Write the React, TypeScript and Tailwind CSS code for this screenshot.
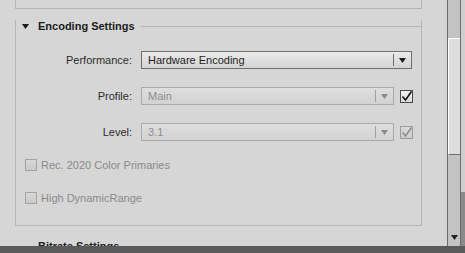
import React from "react";

const Arrow = ({ color }: { color: string }) => (
  <svg width="7" height="5" viewBox="0 0 7 5">
    <polygon points="0,0 7,0 3.5,5" fill={color} />
  </svg>
);

const Select = ({
  value,
  width,
  disabled = false,
}: {
  value: string;
  width: string;
  disabled?: boolean;
}) => (
  <div
    className={`flex h-[18px] items-stretch border bg-gradient-to-b ${width} ${
      disabled
        ? "border-[#a9a9a9] from-[#dedede] to-[#d2d2d2] text-[#8e8e8e]"
        : "border-[#6e6e6e] from-[#ebebeb] to-[#d3d3d3] text-[#1e1e1e]"
    }`}
  >
    <span className="flex flex-1 items-center pl-[6px] leading-none">{value}</span>
    <div className="flex w-[18px] items-center justify-center py-[2px]">
      <div
        className={`flex h-full w-full items-center justify-center border-l ${
          disabled ? "border-[#a0a0a0]" : "border-[#6e6e6e]"
        }`}
      >
        <Arrow color={disabled ? "#8a8a8a" : "#1e1e1e"} />
      </div>
    </div>
  </div>
);

const Check = ({ disabled = false }: { disabled?: boolean }) => (
  <div
    className={`relative h-[13px] w-[13px] border bg-gradient-to-b ${
      disabled
        ? "border-[#9c9c9c] from-[#dadada] to-[#cdcdcd]"
        : "border-[#4a4a4a] from-[#f2f2f2] to-[#d8d8d8]"
    }`}
  >
    <svg
      width="13"
      height="13"
      viewBox="0 0 13 13"
      className="absolute -left-px -top-px overflow-visible"
    >
      <polyline
        points="2.5,6.5 5.5,10 11.5,1.5"
        fill="none"
        stroke={disabled ? "#8e8e8e" : "#111"}
        strokeWidth="1.6"
      />
    </svg>
  </div>
);

const Row = ({ label, children }: { label: string; children: React.ReactNode }) => (
  <div className="flex h-[18px] items-center">
    <span className="w-[116px] text-right text-[#2c2c2c]">{label}</span>
    <div className="ml-[9px] flex items-center">{children}</div>
  </div>
);

const Toggle = ({ label }: { label: string }) => (
  <div className="flex h-[12px] items-center pl-[9px]">
    <div className="h-[12px] w-[12px] border border-[#a2a2a2] bg-gradient-to-b from-[#d9d9d9] to-[#c9c9c9]" />
    <span className="ml-[4px] text-[#8a8a8a]">{label}</span>
  </div>
);

export default function App() {
  return (
    <div className="flex h-[253px] w-[465px] flex-col overflow-hidden bg-[#d6d6d6] font-['Liberation_Sans',Arial,sans-serif] text-[11px]">
      <div className="flex h-[246px]">
        <div className="w-[447px] overflow-hidden">
          <div className="ml-[15px] h-[9px] w-[407px] border-x border-b border-[#b5b5b5]" />

          <div className="ml-[15px] mt-[17px] h-[206px] w-[407px] border-x border-b border-[#b5b5b5]">
            <div className="-mt-[6px] flex h-[13px] items-center">
              <div className="ml-[6px] flex">
                <Arrow color="#1a1a1a" />
              </div>
              <span className="ml-[9px] font-bold text-[#1c1c1c]">Encoding Settings</span>
              <div className="ml-[6px] h-px flex-1 bg-[#b5b5b5]" />
            </div>

            <div className="mt-[18px]">
              <Row label="Performance:">
                <Select value="Hardware Encoding" width="w-[271px]" />
              </Row>
            </div>
            <div className="mt-[18px]">
              <Row label="Profile:">
                <Select value="Main" width="w-[253px]" disabled />
                <div className="ml-[6px]">
                  <Check />
                </div>
              </Row>
            </div>
            <div className="mt-[18px]">
              <Row label="Level:">
                <Select value="3.1" width="w-[253px]" disabled />
                <div className="ml-[6px]">
                  <Check disabled />
                </div>
              </Row>
            </div>

            <div className="mt-[18px]">
              <Toggle label="Rec. 2020 Color Primaries" />
            </div>
            <div className="mt-[21px]">
              <Toggle label="High DynamicRange" />
            </div>
          </div>

          <div className="ml-[38px] mt-[14px] flex h-[13px] items-center">
            <span className="font-bold text-[#1c1c1c]">Bitrate Settings</span>
          </div>
        </div>

        <div className="flex w-[14px] flex-col border-x border-[#6b6b6b] bg-[#c3c3c3]">
          <div className="h-[38px]" />
          <div className="h-[117px] border-l border-t border-b border-l-white border-t-white border-b-[#6b6b6b] bg-[#dedede]" />
          <div className="flex flex-1 items-end justify-center pb-[6px]">
            <Arrow color="#222" />
          </div>
        </div>

        <div className="flex w-[4px] flex-col">
          <div className="h-[192px] bg-[#cfcfcf]" />
          <div className="flex-1 bg-[#8a8a8a]" />
        </div>
      </div>
      <div className="h-[7px] bg-[#5a5a5a]" />
    </div>
  );
}
